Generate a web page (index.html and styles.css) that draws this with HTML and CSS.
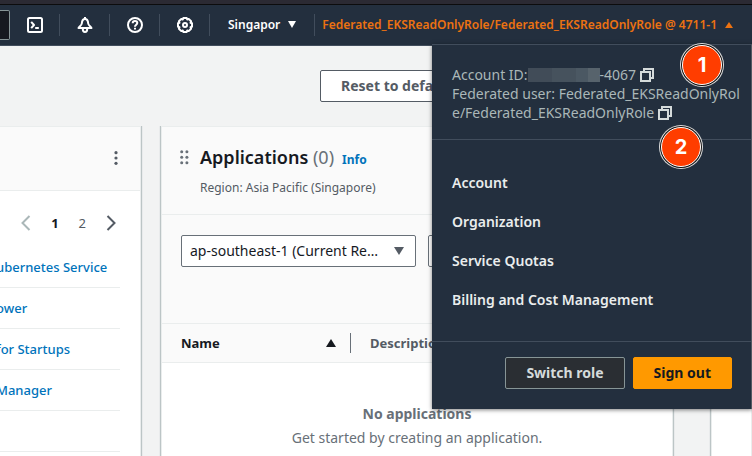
FILE: index.html
```html
<!DOCTYPE html>
<html lang="en">
<head>
<meta charset="utf-8">
<title>Console Home</title>
<link rel="stylesheet" href="styles.css">
</head>
<body>
<header class="topbar">
  <input class="search" type="search" aria-label="Search">
  <button class="tool" aria-label="CloudShell">
    <svg width="16" height="16" viewBox="0 0 16 16"><rect x="1" y="1" width="14" height="14" rx="1.5"/><path d="M4.200 4.800 7 8l-2.800 3.200M8.200 11h3.600"/></svg>
  </button>
  <button class="tool" aria-label="Notifications">
    <svg width="16" height="16" viewBox="0 0 16 16"><path d="M8 0v2M4.800 6.500C5 3.500 6.200 2 8 2s3 1.500 3.200 4.500c.2 2 2.800 3 3.300 4.500h-13c.5-1.500 3.100-2.500 3.300-4.500zM5.800 12c0 2 .8 3 2.200 3s2.200-1 2.200-3"/></svg>
  </button>
  <button class="tool" aria-label="Help">
    <svg width="16" height="16" viewBox="0 0 16 16"><circle cx="8" cy="8" r="7"/><path d="M5.700 6.300C5.700 4.800 6.700 4 8 4s2.300.8 2.300 2.100C10.300 7.700 8 7.800 8 9.700M8 10.800v1.800"/></svg>
  </button>
  <button class="tool" aria-label="Settings">
    <svg width="16" height="16" viewBox="0 0 16 16"><path d="M6.300 1h3.400l.5 1.500 1.500-.6 2.400 2.400-.6 1.500 1.500.5v3.400l-1.500.5.6 1.500-2.400 2.400-1.500-.6-.5 1.500H6.300l-.5-1.500-1.500.6-2.400-2.400.6-1.500L1 9.700V6.300l1.500-.5-.6-1.500 2.400-2.400 1.500.6z"/><circle cx="8" cy="8" r="2"/></svg>
  </button>
  <button class="region">Singapor
    <svg width="8" height="7" viewBox="0 0 8 7"><path d="M0 0h8L4 7z"/></svg>
  </button>
  <button class="user">Federated_EKSReadOnlyRole/Federated_EKSReadOnlyRole @ 4711-1
    <svg width="8" height="6" viewBox="0 0 8 6"><path d="M0 6h8L4 0z"/></svg>
  </button>

  <section class="menu" aria-label="Account menu">
    <div class="identity">
      Account ID:<span class="redacted"></span>-4067
      <button class="copy" aria-label="Copy account ID"><svg width="14" height="14" viewBox="0 0 14 14"><path d="M4 4V1h9v9h-3M1 4h9v9H1z"/></svg></button><br>
      Federated user: Federated_EKSReadOnlyRol<br>e/Federated_EKSReadOnlyRole
      <button class="copy" aria-label="Copy federated user"><svg width="14" height="14" viewBox="0 0 14 14"><path d="M4 4V1h9v9h-3M1 4h9v9H1z"/></svg></button>
      <span class="badge badge-one">1</span>
      <span class="badge badge-two">2</span>
    </div>
    <nav class="menu-links">
      <a href="#">Account</a>
      <a href="#">Organization</a>
      <a href="#">Service Quotas</a>
      <a href="#">Billing and Cost Management</a>
    </nav>
    <div class="menu-actions">
      <button class="switch">Switch role</button>
      <button class="signout">Sign out</button>
    </div>
  </section>
</header>

<main>
  <div class="page-actions">
    <button class="reset">Reset to default layout</button>
  </div>
  <div class="board">
    <section class="card recent">
      <header class="recent-head">
        <button class="plain" aria-label="Widget options"><svg width="4" height="14" viewBox="0 0 4 14"><circle cx="2" cy="1.700" r="1.600"/><circle cx="2" cy="7" r="1.600"/><circle cx="2" cy="12.300" r="1.600"/></svg></button>
      </header>
      <nav class="pager" aria-label="Pages">
        <button class="plain prev" aria-label="Previous page"><svg width="10" height="16" viewBox="0 0 10 16"><path d="M8.500 1 1.500 8l7 7"/></svg></button>
        <button class="plain current">1</button>
        <button class="plain">2</button>
        <button class="plain" aria-label="Next page"><svg width="10" height="16" viewBox="0 0 10 16"><path d="M1.500 1l7 7-7 7"/></svg></button>
      </nav>
      <ul class="services">
        <li><a href="#">ubernetes Service</a></li>
        <li><a href="#">ower</a></li>
        <li><a href="#">for Startups</a></li>
        <li><a href="#">Manager</a></li>
        <li></li>
      </ul>
    </section>

    <section class="card apps">
      <header class="apps-head">
        <svg class="grip" width="9" height="15" viewBox="0 0 9 15"><circle cx="1.700" cy="1.700" r="1.500"/><circle cx="6.900" cy="1.700" r="1.500"/><circle cx="1.700" cy="7.200" r="1.500"/><circle cx="6.900" cy="7.200" r="1.500"/><circle cx="1.700" cy="12.700" r="1.500"/><circle cx="6.900" cy="12.700" r="1.500"/></svg>
        <div>
          <div class="title"><h2>Applications <span>(0)</span></h2><a href="#">Info</a></div>
          <p>Region: Asia Pacific (Singapore)</p>
        </div>
      </header>
      <div class="filters">
        <div class="picker">
          <select aria-label="Region"><option>ap-southeast-1 (Current Re…</option></select>
          <svg width="10" height="8" viewBox="0 0 10 8"><path d="M0 0h10L5 8z"/></svg>
        </div>
        <input type="text" aria-label="Find applications">
      </div>
      <table>
        <thead>
          <tr>
            <th class="name"><div>Name <svg width="10" height="8" viewBox="0 0 10 8"><path d="M0 8h10L5 0z"/></svg></div></th>
            <th class="desc">Description</th>
          </tr>
        </thead>
        <tbody>
          <tr><td colspan="2"><strong>No applications</strong><br>Get started by creating an application.</td></tr>
        </tbody>
      </table>
    </section>

    <section class="card next"></section>
  </div>
</main>
</body>
</html>
```
FILE: styles.css
```css
* { box-sizing: border-box; }
body {
  margin: 0;
  min-height: 100vh;
  overflow: hidden;
  background: #f2f3f3;
  color: #545b64;
  font: 13px/20px "Noto Sans", "Open Sans", sans-serif;
}
button, input, select { font: inherit; color: inherit; margin: 0; }
button { padding: 0; border: 0; background: none; white-space: nowrap; }
a { color: #0073bb; text-decoration: none; }
svg { display: block; fill: currentColor; flex: none; }

.topbar {
  position: relative;
  z-index: 1;
  display: flex;
  align-items: center;
  height: 46px;
  padding-top: 4px;
  background: linear-gradient(#2b2a33 4px, #0c0c0d 4px, #0c0c0d 5px, #232f3e 5px);
  border-bottom: 1px solid #414d5c;
  color: #fff;
}
.search {
  flex: none;
  width: 10px;
  height: 30px;
  padding: 0;
  border: 1px solid #879596;
  border-left: 0;
  border-radius: 0 2px 2px 0;
  background: #16191f;
}
.tool {
  display: flex;
  flex: none;
  align-items: center;
  justify-content: center;
  width: 50px;
  height: 22px;
  padding-left: 1px;
  border-right: 1px solid #414d5c;
}
.tool svg { fill: none; stroke: currentColor; stroke-width: 2; stroke-linejoin: round; }
.region, .user {
  display: flex;
  align-items: center;
  gap: 8px;
  height: 22px;
  font-size: 12px;
  font-weight: 600;
}
.region { padding: 0 18px; border-right: 1px solid #414d5c; }
.user { margin-left: auto; padding-right: 19px; color: #ec7211; }

.menu {
  position: absolute;
  top: 44px;
  right: 0;
  width: 320px;
  background: #232f3e;
  border-top: 1px solid #414d5c;
  border-right: 1px solid #545b64;
  box-shadow: 0 1px 4px rgba(0, 0, 0, .5);
  color: #d5dbdb;
}
.identity {
  position: relative;
  padding: 20px 0 17px 20px;
  border-bottom: 1px solid #414d5c;
  color: #aab7b8;
  font-size: 14px;
  line-height: 19px;
  white-space: nowrap;
}
.redacted {
  display: inline-block;
  width: 72px;
  height: 14px;
  vertical-align: -2px;
  background: linear-gradient(90deg, #414c58 24px, #46525d 24px, #46525d 48px, #4b5863 48px, #4b5863 60px, #57636c 60px);
}
.copy { vertical-align: -2px; color: #d5dbdb; }
.copy svg { fill: none; stroke: currentColor; stroke-width: 2; }
.badge {
  position: absolute;
  width: 40px;
  height: 40px;
  border: 1px solid #fff;
  border-radius: 50%;
  background: #ff3d00;
  box-shadow: 0 0 0 1px #111, 0 0 0 2px #ddd;
  color: #fff;
  font: 700 20px/38px Inter, sans-serif;
  text-align: center;
}
.badge-one { top: 0; right: 29px; }
.badge-two { top: 82px; right: 50px; }
.menu-links {
  display: grid;
  gap: 19px;
  padding: 33px 20px 31px;
  border-bottom: 1px solid #414d5c;
}
.menu-links a { color: #eaeded; font-size: 14px; font-weight: 600; }
.menu-actions {
  display: flex;
  justify-content: flex-end;
  gap: 8px;
  padding: 15px 19px 20px;
}
.switch, .signout, .reset {
  height: 32px;
  padding: 0 20px;
  border: 1px solid #879596;
  border-radius: 2px;
  font-size: 14px;
  font-weight: 700;
}
.switch { background: #2a2e33; color: #d5dbdb; }
.signout { border-color: #f90; background: #f90; color: #16191f; }

.page-actions { padding: 24px 20px 24px 320px; }
.reset { display: block; border-color: #545b64; background: #fff; }

.board { display: flex; align-items: stretch; min-height: calc(100vh - 126px); }
.card {
  background: #fff;
  border: 1px solid #eaeded;
  border-bottom: 0;
  box-shadow: 0 0 1px 1px #bcc5c6;
  clip-path: inset(0 -2px);
}
.recent { width: 141px; border-left: 0; }
.apps { flex: 1; margin-left: 20px; }
.next { width: 41px; margin-left: 38px; }

.plain { display: block; }
.recent-head {
  display: flex;
  justify-content: flex-end;
  padding: 24px 22px 25px;
  background: #fafafa;
  border-bottom: 1px solid #eaeded;
}
.pager {
  display: flex;
  align-items: center;
  justify-content: flex-end;
  gap: 20px;
  padding: 22px 24px 14px 0;
}
.pager svg { fill: none; stroke: currentColor; stroke-width: 2; }
.pager .prev { color: #aab7b8; }
.pager .current { color: #16191f; font-weight: 700; }
.services { margin: 0 20px 0 -4px; padding: 0; list-style: none; }
.services li { height: 41px; padding: 10px 0; border-bottom: 1px solid #eaeded; }
.services a { font-weight: 500; white-space: nowrap; }

.apps-head {
  display: flex;
  gap: 11px;
  padding: 19px 18px 16px;
  background: #fafafa;
  border-bottom: 1px solid #eaeded;
}
.grip { margin-top: 4px; color: #687078; }
.title { display: flex; align-items: baseline; gap: 8px; }
.title h2 { margin: 0; color: #16191f; font-size: 18px; line-height: 22px; font-weight: 600; }
.title span { color: #687078; font-weight: 400; }
.title a { font-size: 12px; font-weight: 700; }
.apps-head p { margin: 8px 0 0; font-size: 12px; line-height: 20px; }
.filters {
  display: flex;
  gap: 12px;
  padding: 20px 19px 56px;
  background: #fafafa;
  border-bottom: 1px solid #eaeded;
}
.picker { position: relative; width: 235px; }
.picker svg { position: absolute; right: 12px; top: 12px; pointer-events: none; }
.filters select, .filters input {
  width: 100%;
  height: 32px;
  padding: 0 8px;
  appearance: none;
  border: 1px solid #687078;
  border-radius: 2px;
  background: #fff;
  color: #16191f;
  font-size: 14px;
}
.filters input { flex: 1; width: auto; min-width: 0; }
table { width: 100%; border-collapse: collapse; }
th {
  height: 38px;
  padding: 0;
  background: #fafafa;
  border-bottom: 1px solid #eaeded;
  text-align: left;
}
.name { width: 189px; color: #16191f; }
.name div {
  display: flex;
  align-items: center;
  justify-content: space-between;
  margin-left: 19px;
  padding-right: 14px;
  border-right: 1px solid #687078;
}
.desc { padding-left: 19px; }
td {
  padding: 39px 20px 4px;
  color: #687078;
  font-size: 14px;
  line-height: 24px;
  text-align: center;
}
```
